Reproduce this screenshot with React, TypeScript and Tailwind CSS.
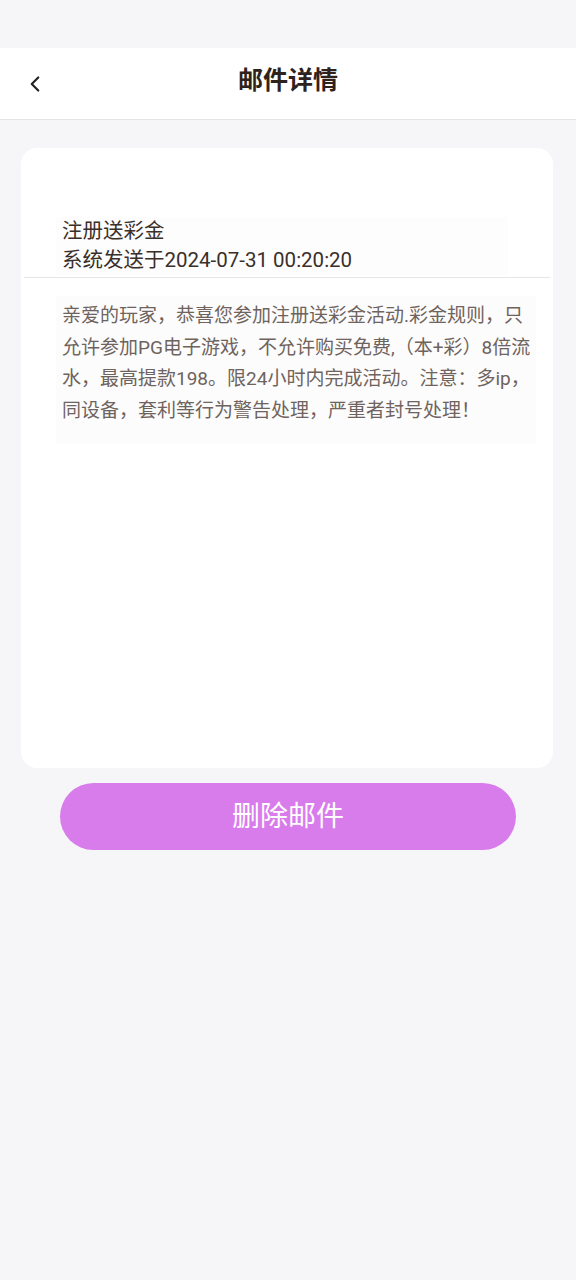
import { ChevronLeft } from 'lucide-react';

export default function App() {
  const font = { fontFamily: 'Roboto, "Noto Sans CJK SC", sans-serif' };

  const bodyLines = [
    '亲爱的玩家，恭喜您参加注册送彩金活动.彩金规则，只',
    '允许参加PG电子游戏，不允许购买免费,（本+彩）8倍流',
    '水，最高提款198。限24小时内完成活动。注意：多ip，',
    '同设备，套利等行为警告处理，严重者封号处理！',
  ];

  return (
    <div className="min-h-[1280px] w-[576px] bg-[#f6f6f8]" style={font}>
      <div className="h-12" />
      <header className="relative flex h-[72px] items-center justify-center border-b border-[#e4e4e6] bg-white pb-[6px]">
        <button className="absolute left-[22px] top-1/2 -translate-y-1/2 text-[#222]">
          <ChevronLeft size={26} strokeWidth={2} />
        </button>
        <h1 className="text-[25px] font-bold text-[#2e221c]">邮件详情</h1>
      </header>

      <main className="px-[21px] pt-[28px]">
        <div className="h-[620px] w-[532px] rounded-[16px] bg-white pt-[69px]">
          <div className="mx-[35px] w-[452px] bg-[#fdfdfd] px-[6px] text-[20.5px] leading-[29px] text-[#3a2f2a]">
            <div>注册送彩金</div>
            <div>系统发送于2024-07-31 00:20:20</div>
          </div>
          <div className="mx-[3px] mt-[2px] h-px bg-[#e6e6e6]" />
          <div className="mx-[35px] mt-[18px] w-[480px] bg-[#fcfcfc] px-[6px] pb-[18px] pt-[4px] text-[19px] leading-[31.5px] text-[#6f635d]">
            {bodyLines.map((line) => (
              <div key={line} className="whitespace-nowrap">
                {line}
              </div>
            ))}
          </div>
        </div>

        <div className="flex justify-center pt-[15px]">
          <button className="h-[67px] w-[456px] rounded-full bg-[#d87cec] text-[28px] text-white">
            删除邮件
          </button>
        </div>
      </main>
    </div>
  );
}
